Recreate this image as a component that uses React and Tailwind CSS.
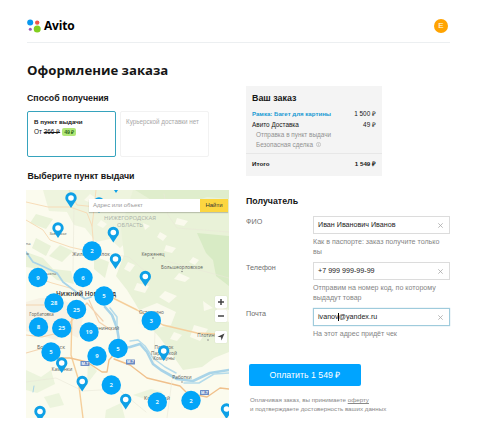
import React from "react";

const clusters = [
  [66, 61, 2], [12, 87.5, 9], [57, 87.5, 6], [78, 106, 5], [28, 113, 28], [50.5, 119.5, 25],
  [12.5, 137, 8], [35.7, 138, 25], [63, 142, 19], [25, 162, 5], [71, 166, 9], [92, 158.5, 5],
  [85.3, 195, 2], [125.3, 130.7, 3], [131.3, 212, 2], [165, 210.5, 2],
];
const pins = [
  [45, 8], [32, 38], [73, 13], [90, -7], [87.3, 42.5], [89.5, 69], [119.3, 86.5], [35.7, 173], [56.2, 191.5],
  [14, 221.5], [99.7, 209.5], [137.7, 161], [200.5, 219],
];
const towns = [
  [32, 45, "Заволжье", 3.6], [2, 55, "на", 4.2], [1, 64.5, "ск", 4.2], [65, 65.5, "Жилой посёлок", 5],
  [22, 85, "Балахна", 4.2], [127, 65.5, "Керженец", 4.7], [156, 79, "Большеорловское", 4.7],
  [15.5, 125.5, "Горбатовка", 4.4], [78, 140, "Афонинский", 5], [125.5, 124, "Останкино", 4.7],
  [181, 147, "Плотинс", 4.7], [25, 159, "Богородск", 5.6], [36, 180.5, "Каменки", 4.9],
  [138, 159, "Посёлок", 4.7], [138, 164.5, "Парижской", 4.7], [138, 170, "Коммуны", 4.7],
  [156, 189, "Работки", 4.9], [131, 209.5, "Кстовский", 5.2],
];

function CityMap() {
  return (
    <svg viewBox="0 0 203 228" width="203" height="228" className="block font-['Open_Sans',sans-serif]">
      <rect width="203" height="228" fill="#fbfbee" />
      <g fill="#e9f2d8">
        <path d="M17 0H107L114 12 102 28 108 45 94 58 84 49 70 52 59 38 48 35 41 22 23 21Z" opacity=".75" />
        <path d="M107 0H203V162L188 168 176 177 157 180 143 160 134 148 120 132 109 113 101 100 90 86 98 65 95 38Z" />
        <path d="M0 62 17 68 27 79 45 81 48 94 31 90 19 80 0 77Z" />
        <path d="M10 24 27 29 20 39 4 33ZM34 55 47 61 36 72 23 66ZM10 48 25 56 20 66 6 58ZM68 66 83 72 79 88 68 79Z" />
        <path d="M0 180 15 187 25 180 29 194 11 203 0 200ZM62 171 71 181 61 194ZM107 205 125 199 137 202 119 209ZM18 207 33 203 38 215 24 218ZM80 220 95 213 99 228H79Z" opacity=".8" />
      </g>
      <path d="M171 43 203 46V96L190 86 187 70 180 63Z" fill="#d8ebc5" />
      <path d="M109 0H203V9L181 7 164 13 127 11Z" fill="#dfedcc" />
      <g fill="#fafaed">
        <path d="M134 42 141 46 137 51 131 47ZM140 55 150 58 146 63 138 61ZM167 67 173 70 169 75 163 72ZM102 72 109 75 104 82 98 79ZM111 93 123 96 119 103 108 100ZM153 83 164 88 159 92 148 89ZM139 101 151 106 143 113 133 107ZM177 111 187 118 178 121ZM111 121 131 113 150 122 145 135 127 139 112 133ZM64 4 70 8 65 13 58 10ZM75 30 81 34 77 38 71 35Z" />
        <path d="M168 135 182 139 174 151 164 147ZM190 116 203 120V132L193 129ZM148 142 156 145 151 151 144 149ZM117 33 124 36 119 40ZM151 28 162 31 158 36 149 34Z" />
      </g>
      <path d="M0 112 14 108 31 107 47 115 57 128 52 148 39 142 30 150 12 145 0 141Z" fill="#f7f2e4" />
      <g fill="none" strokeLinejoin="round" strokeLinecap="round">
        <path d="M0 12 22 17H44L61 23 66 36 68 61M0 30 17 40 24 50 44 57 66 62M70 0 67 28 66 36M43 0 51 15 70 17M5 86 26 93 44 98 58 108" stroke="#f7dcb8" strokeWidth="1" />
        <path d="M0 115H22M0 145 16 147 36 142 48 128 61 113M0 163 25 156M63 110 73 132 85 140M61 113 77 131" stroke="#f3d3b0" strokeWidth="1.2" />
        <path d="M46 122 45 165 52 188 57 228M87 108 111 120 137 135 171 143 190 144" stroke="#f5cf9c" strokeWidth="1.4" />
        <path d="M28 168 44 168 61 172 76 182H81L83 170 92 160M88 169 104 175 121 188 154 196 161 203 181 207 194 198 203 199" stroke="#f0c08c" strokeWidth="1.4" />
        <path d="M48 17 47 81M66 61 103 67 121 83M140 71 203 88M129 142 128 172M138 4 142 25 151 38 203 42M0 192 30 188 57 201 92 199 120 222M146 190 141 228" stroke="#eae8d8" strokeWidth=".6" />
        <path d="M0 62 7 72 14 75 31 83 37 92 49 101 59 109 65 107" stroke="#a9d4e8" strokeWidth="1.8" />
        <path d="M79 117 86 125 91 138 93 150 96 158 104 157 114 154 121 162 127 174 135 180 151 189 167 191 184 183 203 180" stroke="#a9d4e8" strokeWidth="2.6" />
        <path d="M84 118 91 127 91 139M104 151 112 150 119 156 127 168 139 177 150 183M158 193 173 193 188 184 203 183" stroke="#b5dbea" strokeWidth="1.5" />
        <path d="M8 196 7 202" stroke="#a9d4e8" strokeWidth="1" />
      </g>
      <g textAnchor="middle">
        <g fontSize="5.8" fill="#a9b0a8">
          <text x="104" y="30" textLength="52" lengthAdjust="spacingAndGlyphs">НИЖЕГОРОДСКАЯ</text>
          <text x="104" y="36.500" textLength="26" lengthAdjust="spacingAndGlyphs">ОБЛАСТЬ</text>
        </g>
        {towns.map(([x, y, name, size]) => (
          <text key={name} x={x} y={y} fontSize={size} fill="#5b5d59">{name}</text>
        ))}
        <text x="60" y="106" fontSize="7" fontWeight="600" fill="#303030" textLength="60" lengthAdjust="spacingAndGlyphs">Нижний Новгород</text>
      </g>
      <g fill="#888">
        <circle cx="127" cy="68" r=".8" /><circle cx="156" cy="81.500" r=".8" />
        <circle cx="182" cy="150" r=".8" /><circle cx="156" cy="192" r=".8" />
      </g>
      <g fontSize="3.7" fontWeight="700" textAnchor="middle">
        {[[59, 173.5], [104.5, 172], [178.5, 202.5]].map(([x, y]) => (
          <g key={x}>
            <rect x={x - 4.500} y={y - 2.500} width="9" height="5" rx=".5" fill="#6c8bc4" />
            <text x={x} y={y + 1.3} fill="#fff">М-7</text>
          </g>
        ))}
      </g>
      {pins.map(([x, y]) => (
        <g key={`${x}-${y}`} transform={`translate(${x} ${y})`}>
          <path d="M0 10-3.800 4.300A5.700 5.700 0 1 1 3.800 4.300Z" fill="#0ea0e6" />
          <circle r="2.800" fill="#fff" />
        </g>
      ))}
      {clusters.map(([x, y, n]) => (
        <g key={`${x}-${y}`}>
          <circle cx={x} cy={y} r="9.700" fill="#03a5f8" />
          <text x={x} y={y + 2.200} fontSize="6" fontWeight="700" fill="#dff5ff" textAnchor="middle">{n}</text>
        </g>
      ))}
    </svg>
  );
}

function Field({ label, value, hint, focused, className }) {
  return (
    <div className={`flex ${className}`}>
      <div className="w-[67px] pt-px text-[7.2px] leading-[10px] text-[#6e6e6e]">{label}</div>
      <div className="w-[137px]">
        <div className={`flex h-[18px] items-center justify-between border pr-[6px] pl-[4px] text-[7.15px] ${focused ? "border-[#9fcbdc] shadow-[0_0_1px_#9fcbdc]" : "border-[#dcdcdc]"}`}>
          <span className="whitespace-nowrap text-[#222]">{value}</span>
          <svg viewBox="0 0 5 5" className="size-[5px]" stroke="#aaa" strokeWidth=".8"><path d="M.3.3 4.700 4.700M4.700.3.3 4.700" /></svg>
        </div>
        <div className="mt-[3px] whitespace-pre text-[7.1px] leading-[10px] text-[#858585]">{hint}</div>
      </div>
    </div>
  );
}

export default function App() {
  return (
    <div className="h-[423px] w-[500px] overflow-hidden bg-white font-['Liberation_Sans',Arial,sans-serif] text-[#161616]">
      <header className="ml-[27px] flex h-[43px] w-[423px] items-center justify-between border-b border-[#eceff1] pt-[9px]">
        <div className="flex items-center gap-[3px]">
          <svg viewBox="0 0 14 14" className="size-[14px]">
            <circle cx="3.200" cy="3.500" r="3" fill="#0998ee" />
            <circle cx="10.200" cy="3.600" r="2.200" fill="#f15749" />
            <circle cx="3.300" cy="10.300" r="1.500" fill="#9b58b6" />
            <circle cx="10.200" cy="10" r="3.500" fill="#83cf20" />
          </svg>
          <span className="font-['Open_Sans',sans-serif] text-[12px] leading-[14px] font-bold tracking-[-0.2px] text-black">Avito</span>
        </div>
        <div className="mr-[2px] flex size-[14px] items-center justify-center rounded-full bg-[#ffa300] text-[8px] text-white">E</div>
      </header>

      <h1 className="mt-[17px] ml-[27px] h-[20px] font-['Open_Sans',sans-serif] text-[13.2px] leading-[20px] font-bold whitespace-nowrap">Оформление заказа</h1>

      <main className="mt-[6px] flex items-start gap-[17px] pl-[26px]">
        <section className="w-[203px] shrink-0 pt-[6px]">
          <h2 className="h-[12px] pl-px text-[8.8px] leading-[12px] font-bold whitespace-nowrap">Способ получения</h2>
          <div className="mt-[7px] flex h-[46px] gap-[4px] pl-px">
            <div className="w-[89px] rounded-[2px] border border-[#36a3bd] px-[6px] pt-[5px] text-[6.8px] leading-[10px]">
              <div className="text-[6.2px] font-bold whitespace-nowrap">В пункт выдачи</div>
              <div className="flex items-center whitespace-nowrap text-[6.4px]">
                От&nbsp;<s>366 ₽</s>
                <span className="ml-[2px] h-[8px] rounded-[2px] bg-[#b1e878] px-[2px] text-[5.2px] leading-[8px] font-bold text-[#28641b]">49 ₽</span>
              </div>
            </div>
            <div className="w-[89px] rounded-[2px] border border-[#f2f2f2] px-[5px] pt-[5px] text-[6.3px] leading-[10px] whitespace-nowrap text-[#a8a8a8]">Курьерской доставки нет</div>
          </div>
          <h2 className="mt-[12px] h-[14px] pl-[1.5px] text-[8.8px] leading-[14px] font-bold whitespace-nowrap">Выберите пункт выдачи</h2>
          <div className="relative mt-[7px] h-[228px] w-[203px] overflow-hidden">
            <CityMap />
            <div className="absolute top-[9px] left-[63px] flex h-[13px] w-[139px] items-center bg-white text-[6px] shadow-[0_1px_1px_#0003]">
              <span className="grow pl-[4px] text-[#999]">Адрес или объект</span>
              <span className="flex h-full w-[28px] items-center justify-center bg-[#fcd640] text-[#333]">Найти</span>
            </div>
            <div className="absolute top-[106px] right-[2px] flex w-[12px] flex-col items-center">
              {["M6 3v6M3 6h6", "M3 6h6"].map((d) => (
                <svg key={d} viewBox="0 0 12 12" className="mb-[2px] size-[12px] rounded-[1px] bg-white shadow-[0_0_1px_#0003]" stroke="#444" strokeWidth="1.5"><path d={d} /></svg>
              ))}
              <svg viewBox="0 0 12 12" className="mt-[7px] size-[12px] rounded-[1px] bg-white shadow-[0_0_1px_#0003]" fill="#444"><path d="M9.500 2.500 6.500 9.500 6 6.200 2.500 5.700Z" /></svg>
            </div>
          </div>
        </section>

        <section className="w-[205px] shrink-0">
          <div className="h-[90px] w-[136px] bg-[#f4f4f4] pt-[6px] text-[6.4px] leading-[10px] whitespace-nowrap">
            <h2 className="mb-[5px] px-[6px] text-[8.9px] leading-[12px] font-bold">Ваш заказ</h2>
            <div className="flex justify-between px-[6px] leading-[10.500px]"><span className="text-[6.1px] font-bold text-[#189ad3]">Рамка: Багет для картины</span><span>1 500 ₽</span></div>
            <div className="flex justify-between px-[6px]"><span>Авито Доставка</span><span>49 ₽</span></div>
            <div className="pl-[10px] text-[#929292]">Отправка в пункт выдачи</div>
            <div className="flex items-center pl-[10px] text-[#929292]">Безопасная сделка
              <svg viewBox="0 0 6 6" className="ml-[3px] size-[5px]" fill="none" stroke="#aaa" strokeWidth=".7"><circle cx="3" cy="3" r="2.500" /><path d="M3 2.500v2M3 1.300v.6" /></svg>
            </div>
            <div className="mt-[3px] flex justify-between border-t border-[#e7e7e7] px-[6px] pt-[5px] text-[6.2px] font-bold"><span>Итого</span><span>1 549 ₽</span></div>
          </div>
          <h2 className="mt-[19px] text-[8.8px] leading-[12px] font-bold">Получатель</h2>
          <Field className="mt-[9px]" label="ФИО" value="Иван Иванович Иванов" hint={"Как в паспорте: заказ получите только\nвы"} />
          <Field className="mt-[5px]" label="Телефон" value="+7 999 999-99-99" hint={"Отправим на номер код, по которому\nвыдадут товар"} />
          <Field className="mt-[5px]" label="Почта" focused value={<>ivanov<span className="-mx-[.5px] inline-block h-[8px] w-px bg-black align-middle" />@yandex.ru</>} hint="На этот адрес придёт чек" />
          <button className="mt-[25px] ml-[3px] block h-[22px] w-[112px] rounded-[2px] bg-[#00a4ff] text-[8.8px] leading-[22px] whitespace-nowrap text-white">Оплатить 1 549 ₽</button>
          <p className="mt-[10px] pl-[4px] text-[6.2px] leading-[8.500px] whitespace-nowrap text-[#888]">Оплачивая заказ, вы принимаете <u>оферту</u><br />и подтверждаете достоверность ваших данных</p>
        </section>
      </main>
    </div>
  );
}
